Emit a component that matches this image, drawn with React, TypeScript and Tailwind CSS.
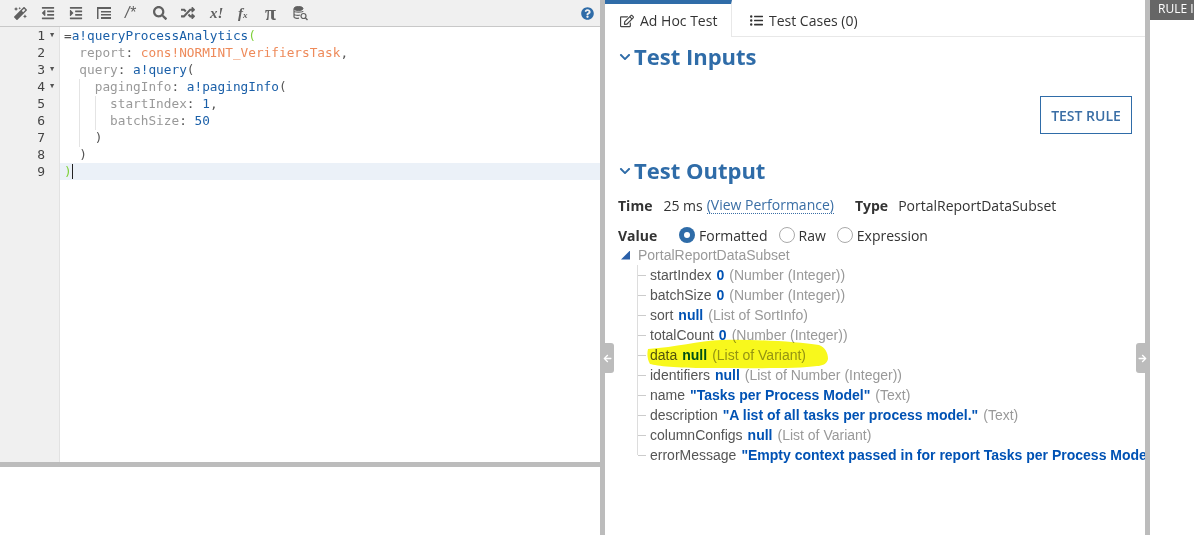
import { FaMagic, FaOutdent, FaIndent, FaSearch, FaRandom, FaQuestionCircle, FaRegEdit, FaListUl, FaArrowLeft, FaArrowRight, FaChevronDown } from "react-icons/fa";

const mono = "font-['DejaVu_Sans_Mono',monospace]";

const gutterLines = [
  { n: 1, fold: true },
  { n: 2 },
  { n: 3, fold: true },
  { n: 4, fold: true },
  { n: 5 },
  { n: 6 },
  { n: 7 },
  { n: 8 },
  { n: 9 },
];

function Toolbar() {
  const cls = "text-[#606060] shrink-0";
  return (
    <div className="h-[27px] shrink-0 bg-[#f0f0f0] border-b border-[#c8c8c8] flex items-center pl-[14px] pr-[6px] text-[#606060]">
      <FaMagic size={13} className={cls} />
      <FaOutdent size={14} className={`${cls} ml-[14px]`} />
      <FaIndent size={14} className={`${cls} ml-[14px]`} />
      <svg width="14" height="14" viewBox="0 0 14 14" className="ml-[14px] shrink-0" fill="#606060">
        <rect x="0" y="1" width="14" height="2" />
        <rect x="0" y="1" width="1.5" height="12" />
        <rect x="4" y="5" width="10" height="1.5" />
        <rect x="4" y="8" width="10" height="1.5" />
        <rect x="4" y="11" width="10" height="2" />
      </svg>
      <span className="ml-[14px] w-[14px] text-[16px] italic font-['Liberation_Sans',sans-serif]">/*</span>
      <FaSearch size={14} className={`${cls} ml-[14px]`} />
      <FaRandom size={14} className={`${cls} ml-[14px]`} />
      <span className="ml-[15px] w-[14px] text-[15px] font-bold italic font-['Liberation_Serif',serif]">x!</span>
      <span className="ml-[14px] w-[13px] text-[15px] font-bold italic font-['Liberation_Serif',serif]">f<span className="text-[9px]">x</span></span>
      <span className="ml-[14px] w-[14px] text-[20px] leading-none font-bold font-['Liberation_Serif',serif]">π</span>
      <svg width="15" height="15" viewBox="0 0 15 15" className="ml-[14px]" fill="none" stroke="#606060">
        <ellipse cx="5.5" cy="2.5" rx="4.5" ry="2" fill="#606060" />
        <path d="M1 5c0 1.5 9 1.5 9 0M1 8c0 1.5 5 1.5 6 1M1 11c0 1 3 1.5 5 1.2M1 3v8" strokeWidth="1.2" />
        <circle cx="10.5" cy="10" r="2.5" strokeWidth="1.2" />
        <path d="M12.5 12l2 2" strokeWidth="1.5" />
      </svg>
      <FaQuestionCircle size={13} className="ml-auto text-[#2f6ca8]" />
    </div>
  );
}

function Editor() {
  return (
    <div className="flex-1 flex min-h-0">
      <div className={`w-[60px] shrink-0 bg-[#f0f0f0] border-r border-[#e2e2e2] text-[#444] text-[13px] ${mono}`}>
        {gutterLines.map((l) => (
          <div key={l.n} className="h-[17px] leading-[17px] flex items-center justify-end pr-[3px]">
            <span>{l.n}</span>
            <span className="w-[11px] pl-[5px] text-[7px] leading-none text-[#555]">{l.fold ? "▼" : ""}</span>
          </div>
        ))}
      </div>
      <div className={`relative flex-1 text-[12.75px] whitespace-pre ${mono}`}>
        {/* indent guides */}
        <div className="absolute left-[19px] top-[52px] w-px h-[68px] bg-[#e4e4e4]" />
        <div className="absolute left-[35px] top-[69px] w-px h-[34px] bg-[#e4e4e4]" />
        <div className="h-[17px] leading-[17px] pl-[4px]">
          <span className="text-[#555]">=</span>
          <span className="text-[#1a5fa8]">a!queryProcessAnalytics</span>
          <span className="text-[#7fd13b]">(</span>
        </div>
        <div className="h-[17px] leading-[17px] pl-[4px]">
          <span className="text-[#999]">  report</span>
          <span className="text-[#555]">: </span>
          <span className="text-[#ee8a5a]">cons!NORMINT_VerifiersTask</span>
          <span className="text-[#555]">,</span>
        </div>
        <div className="h-[17px] leading-[17px] pl-[4px]">
          <span className="text-[#999]">  query</span>
          <span className="text-[#555]">: </span>
          <span className="text-[#1a5fa8]">a!query</span>
          <span className="text-[#555]">(</span>
        </div>
        <div className="h-[17px] leading-[17px] pl-[4px]">
          <span className="text-[#999]">    pagingInfo</span>
          <span className="text-[#555]">: </span>
          <span className="text-[#1a5fa8]">a!pagingInfo</span>
          <span className="text-[#555]">(</span>
        </div>
        <div className="h-[17px] leading-[17px] pl-[4px]">
          <span className="text-[#999]">      startIndex</span>
          <span className="text-[#555]">: </span>
          <span className="text-[#1a5fa8]">1</span>
          <span className="text-[#555]">,</span>
        </div>
        <div className="h-[17px] leading-[17px] pl-[4px]">
          <span className="text-[#999]">      batchSize</span>
          <span className="text-[#555]">: </span>
          <span className="text-[#1a5fa8]">50</span>
        </div>
        <div className="h-[17px] leading-[17px] pl-[4px] text-[#555]">{"    )"}</div>
        <div className="h-[17px] leading-[17px] pl-[4px] text-[#555]">{"  )"}</div>
        <div className="h-[17px] leading-[17px] pl-[4px] bg-[#ebf1f8] flex items-center">
          <span className="text-[#7fd13b]">)</span>
          <span className="w-px h-[15px] bg-[#222]" />
        </div>
      </div>
    </div>
  );
}

const treeRows = [
  { label: "startIndex", value: "0", type: "(Number (Integer))" },
  { label: "batchSize", value: "0", type: "(Number (Integer))" },
  { label: "sort", value: "null", type: "(List of SortInfo)" },
  { label: "totalCount", value: "0", type: "(Number (Integer))" },
  { label: "data", value: "null", type: "(List of Variant)" },
  { label: "identifiers", value: "null", type: "(List of Number (Integer))" },
  { label: "name", value: '"Tasks per Process Model"', type: "(Text)" },
  { label: "description", value: '"A list of all tasks per process model."', type: "(Text)" },
  { label: "columnConfigs", value: "null", type: "(List of Variant)" },
  { label: "errorMessage", value: '"Empty context passed in for report Tasks per Process Model"', type: "" },
];

function Tree() {
  return (
    <div className="font-['Liberation_Sans',sans-serif] text-[14px] whitespace-nowrap">
      <div className="h-[20px] leading-[20px] flex items-center pl-[3px] text-[#999]">
        <span className="w-[9px] h-[9px] bg-[#2a5fa8] [clip-path:polygon(100%_0,100%_100%,0_100%)] mr-[8px]" />
        PortalReportDataSubset
      </div>
      <div className="ml-[19px]">
        {treeRows.map((r, i) => (
          <div key={r.label} className="h-[20px] leading-[20px] flex items-center">
            <span className={`w-px bg-[#ddd] shrink-0 self-start ${i === treeRows.length - 1 ? "h-[10px]" : "h-[20px]"}`} />
            <span className="w-[8px] h-px bg-[#ccc] mr-[4px] shrink-0" />
            <span className="text-[#555]">{r.label}</span>
            <span className="ml-[5px] font-bold text-[#0052b4]">{r.value}</span>
            {r.type && <span className="ml-[5px] text-[#999]">{r.type}</span>}
          </div>
        ))}
      </div>
    </div>
  );
}

function Radio({ label, checked }: { label: string; checked?: boolean }) {
  return (
    <span className="flex items-center mr-[11px] gap-[4px]">
      {checked ? (
        <span className="w-[16px] h-[16px] rounded-full bg-[#2f6ca8] flex items-center justify-center">
          <span className="w-[6px] h-[6px] rounded-full bg-white" />
        </span>
      ) : (
        <span className="w-[16px] h-[16px] rounded-full border border-[#aaa] bg-white" />
      )}
      {label}
    </span>
  );
}

function SectionTitle({ children }: { children: string }) {
  return (
    <div className="flex items-center text-[#2f6ca8] text-[22px] leading-[30px] font-bold">
      <FaChevronDown size={12} className="mr-[3px] ml-[1px] mt-[2px]" />
      {children}
    </div>
  );
}

function TestPanel() {
  return (
    <div className="relative w-[540px] shrink-0 h-full overflow-hidden bg-white font-['Open_Sans',sans-serif] text-[#333]">
      <div className="h-[37px] flex border-b border-[#e8e8e8] text-[14px]">
        <div className="w-[127px] border-t-[4px] border-[#2f6ca8] border-r border-r-[#e8e8e8] bg-white h-[37px] flex items-center pl-[15px] gap-[6px]">
          <FaRegEdit size={14} className="text-[#444]" />
          Ad Hoc Test
        </div>
        <div className="flex items-center pl-[18px] gap-[6px] pt-[4px]">
          <FaListUl size={13} className="text-[#333]" />
          Test Cases (0)
        </div>
      </div>
      <div className="pl-[13px] pr-[13px]">
        <div className="pt-[4px]">
          <SectionTitle>Test Inputs</SectionTitle>
        </div>
        <div className="flex justify-end pt-[25px]">
          <button className="w-[92px] h-[38px] border border-[#2f6ca8] text-[#3a6ea5] text-[14px] font-semibold">TEST RULE</button>
        </div>
        <div className="pt-[21px]">
          <SectionTitle>Test Output</SectionTitle>
        </div>
        <div className="flex items-center h-[20px] mt-[10px] text-[14px]">
          <span className="font-bold">Time</span>
          <span className="ml-[11px]">25 ms</span>
          <span className="ml-[4px] text-[#3a6ea5] border-b border-dotted border-[#3a6ea5] leading-[16px]">(View Performance)</span>
          <span className="ml-[21px] font-bold">Type</span>
          <span className="ml-[10px]">PortalReportDataSubset</span>
        </div>
        <div className="flex items-center h-[20px] mt-[10px] text-[14px]">
          <span className="font-bold w-[61px]">Value</span>
          <Radio label="Formatted" checked />
          <Radio label="Raw" />
          <Radio label="Expression" />
        </div>
        <Tree />
      </div>
      {/* marker scribble over the data row */}
      <svg className="absolute left-[42px] top-[339px] mix-blend-multiply pointer-events-none" width="184" height="32" viewBox="0 0 184 32">
        <path d="M1 10C30 8 50 2 75 1c35-1 75 2 97 5 6 2 9 8 9 14-1 5-6 7-11 7-20 3-70 2-110 2C30 29 10 27 3 25 0 20 0 14 1 10z" fill="#f8f81c" />
      </svg>
    </div>
  );
}

export default function App() {
  return (
    <div className="relative h-[535px] w-[1194px] flex bg-white overflow-hidden">
      <div className="w-[600px] shrink-0 flex flex-col h-full">
        <Toolbar />
        <Editor />
        <div className="h-[5px] shrink-0 bg-[#bcbcbc]" />
        <div className="h-[68px] shrink-0 bg-white" />
      </div>
      <div className="w-[5px] shrink-0 bg-[#bcbcbc]" />
      <TestPanel />
      <div className="w-[5px] shrink-0 bg-[#bcbcbc]" />
      <div className="flex-1 overflow-hidden">
        <div className="h-[20px] bg-[#666] text-white text-[12px] leading-[18px] pl-[8px] whitespace-nowrap font-['Open_Sans',sans-serif]">RULE INPUTS</div>
      </div>
      <div className="absolute left-[601px] top-[343px] w-[13px] h-[30px] bg-[#bcbcbc] rounded-r-[3px] flex items-center justify-center">
        <FaArrowLeft size={9} className="text-white" />
      </div>
      <div className="absolute left-[1136px] top-[343px] w-[13px] h-[30px] bg-[#bcbcbc] rounded-l-[3px] flex items-center justify-center">
        <FaArrowRight size={9} className="text-white" />
      </div>
    </div>
  );
}
